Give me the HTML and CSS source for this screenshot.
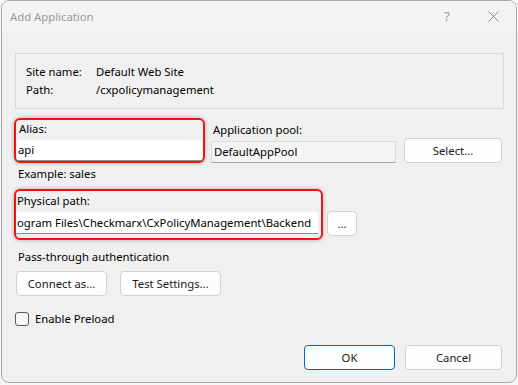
FILE: index.html
```html
<!DOCTYPE html>
<html lang="en">
<head>
    <meta charset="UTF-8">
    <title>Add Application</title>
    <link rel="stylesheet" href="styles.css">
</head>
<body>

    <div class="window">
        <div class="titlebar">
            <span class="title">Add Application</span>
            <span class="help">?</span>
            <span class="close">
                <svg width="11" height="11" viewBox="0 0 11 11"><path d="M0.5 0.5 L10.5 10.5 M10.5 0.5 L0.5 10.5" stroke="#8c8c8c" stroke-width="1" fill="none"/></svg>
            </span>
        </div>

        <div class="content">
            <div class="site-box">
                <div class="site-row"><span class="site-label">Site name:</span><span>Default Web Site</span></div>
                <div class="site-row"><span class="site-label">Path:</span><span>/cxpolicymanagement</span></div>
            </div>

            <div class="row-alias">
                <div class="mark alias-mark">
                    <div class="field-label">Alias:</div>
                    <div class="textbox">api</div>
                </div>
                <div class="pool">
                    <div class="field-label">Application pool:</div>
                    <div class="textbox readonly">DefaultAppPool</div>
                </div>
                <button class="btn btn-select">Select...</button>
            </div>

            <div class="hint">Example: sales</div>

            <div class="row-path">
                <div class="mark path-mark">
                    <div class="field-label">Physical path:</div>
                    <div class="textbox">ogram Files\Checkmarx\CxPolicyManagement\Backend</div>
                </div>
                <button class="btn btn-browse">...</button>
            </div>

            <div class="hint section">Pass-through authentication</div>
            <div class="row-buttons">
                <button class="btn btn-connect">Connect as...</button>
                <button class="btn btn-test">Test Settings...</button>
            </div>

            <label class="check-row">
                <span class="checkbox"></span>
                <span>Enable Preload</span>
            </label>

            <div class="footer">
                <button class="btn btn-ok">OK</button>
                <button class="btn btn-cancel">Cancel</button>
            </div>
        </div>
    </div>

</body>
</html>
```

FILE: styles.css
```css
body {
    margin: 0;
    background-color: #f7f7f7;
    font-family: 'Noto Sans', sans-serif;
    font-size: 11.3px;
    color: #000;
}

.window {
    box-sizing: border-box;
    width: 516px;
    height: 383px;
    margin-left: 1px;
    border: 1px solid #a9a9a9;
    border-radius: 8px;
    overflow: hidden;
    background-color: #f0f0f0;
}

.titlebar {
    height: 30px;
    display: flex;
    align-items: center;
    padding-left: 8px;
    background-color: #f3f3f3;
    color: #9a9a9a;
}

.help {
    margin-left: auto;
    width: 46px;
    text-align: center;
    font-size: 13px;
}

.close {
    width: 46px;
    display: flex;
    justify-content: center;
}

.content {
    padding: 22px 12px 0 12px;
}

.site-box {
    margin-left: 1px;
    border: 1px solid #dadada;
    padding: 9px 10px;
    line-height: 18px;
}

.site-label {
    display: inline-block;
    width: 70px;
}

.row-alias {
    display: flex;
    align-items: flex-end;
    margin-top: 9px;
}

.mark {
    box-sizing: border-box;
    border: 2px solid #f21313;
    border-radius: 6px;
    box-shadow: 0 0 4px rgba(0, 0, 0, 0.3);
}

.alias-mark {
    width: 191px;
    padding: 0 1px 0 1px;
}

.field-label {
    line-height: 18px;
    padding-left: 2px;
}

.textbox {
    height: 20px;
    line-height: 20px;
    margin-top: 2px;
    padding-left: 1px;
    background-color: #fff;
    border-bottom: 1px solid #8a8a8a;
    white-space: nowrap;
    overflow: hidden;
}

.pool {
    width: 185px;
    margin-left: 6px;
}

.textbox.readonly {
    height: 20px;
    padding-left: 2px;
    background-color: #f4f4f4;
    border: 1px solid #dcdcdc;
    border-bottom-color: #a6a6a6;
}

.btn {
    box-sizing: border-box;
    height: 25px;
    padding: 0;
    background-color: #fdfdfd;
    border: 1px solid #d2d2d2;
    border-radius: 4px;
    font-family: inherit;
    font-size: 11.3px;
    color: #1a1a1a;
}

.btn-select {
    width: 98px;
    margin-left: 8px;
}

.hint {
    line-height: 18px;
    margin-top: 2px;
    padding-left: 4px;
}

.row-path {
    display: flex;
    align-items: flex-end;
    margin-top: 6px;
}

.path-mark {
    width: 309px;
    padding: 1px 3px 4px 0;
}

.path-mark .field-label {
    padding-left: 1px;
}

.path-mark .textbox {
    height: 21px;
    line-height: 21px;
    padding-left: 1px;
}

.btn-browse {
    width: 30px;
    margin-left: 4px;
    margin-bottom: 4px;
}

.hint.section {
    margin-top: 8px;
}

.row-buttons {
    display: flex;
    gap: 13px;
    margin-top: 5px;
    padding-left: 2px;
}

.btn-connect {
    width: 91px;
}

.btn-test {
    width: 101px;
}

.check-row {
    display: flex;
    align-items: center;
    gap: 6px;
    margin-top: 14px;
    margin-left: 1px;
    line-height: 18px;
}

.checkbox {
    box-sizing: border-box;
    width: 14px;
    height: 14px;
    border: 1px solid #5a5a5a;
    border-radius: 3px;
    background-color: #f7f7f7;
}

.footer {
    display: flex;
    justify-content: flex-end;
    gap: 10px;
    margin-top: 17px;
    margin-right: 2px;
}

.btn-ok {
    width: 91px;
    border-color: #0067c0;
}

.btn-cancel {
    width: 97px;
}
```
